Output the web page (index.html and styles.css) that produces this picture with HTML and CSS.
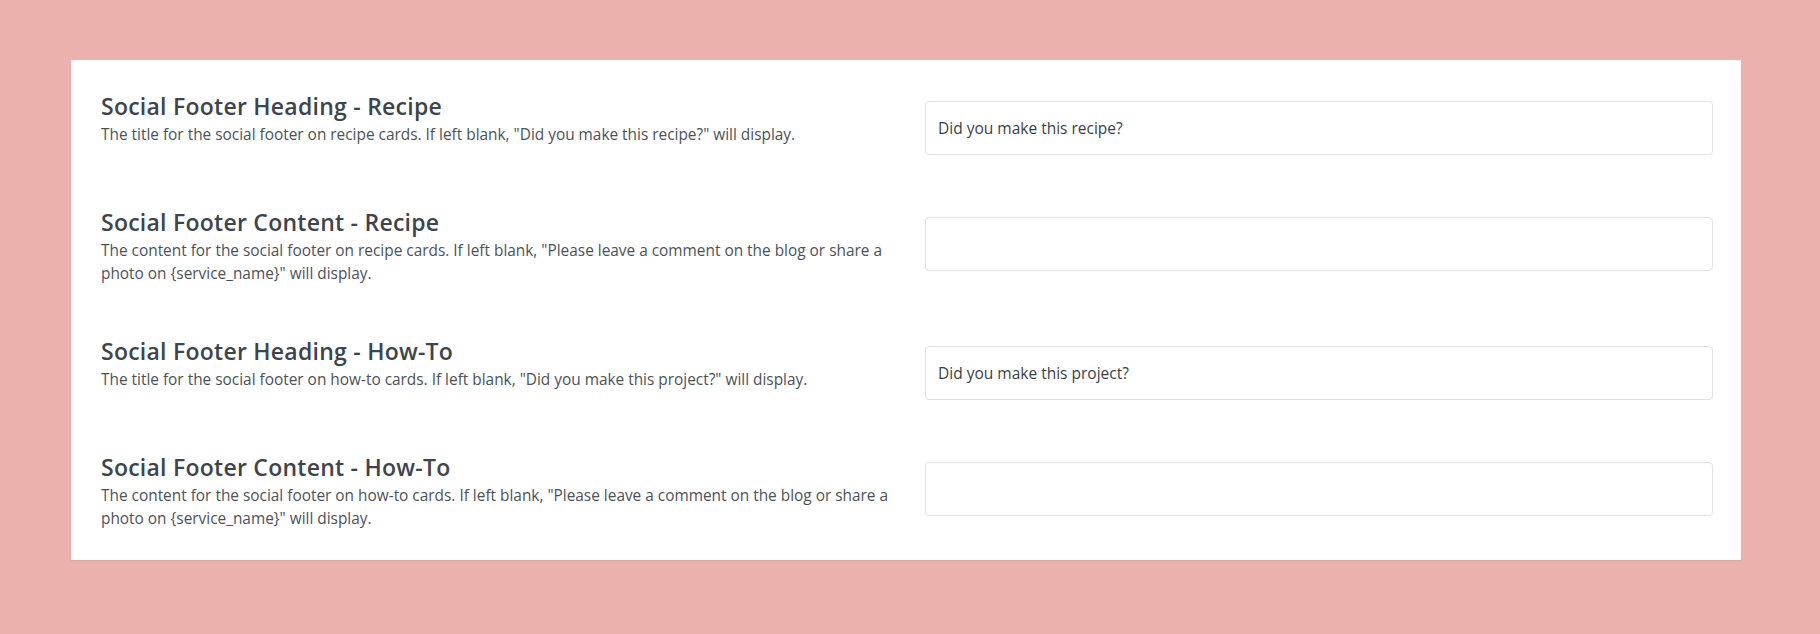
FILE: index.html
```html
<!DOCTYPE html>
<html lang="en">
<head>
<meta charset="utf-8">
<title>Social Footer Settings</title>
<link rel="stylesheet" href="styles.css">
</head>
<body>
<div class="stage">
  <section class="panel">
    <div class="row">
      <div class="label">
        <h3 class="title">Social Footer Heading - Recipe</h3>
        <p class="desc">The title for the social footer on recipe cards. If left blank, "Did you make this recipe?" will display.</p>
      </div>
      <div class="field"><input class="input" type="text" value="Did you make this recipe?"></div>
    </div>
    <div class="row">
      <div class="label">
        <h3 class="title">Social Footer Content - Recipe</h3>
        <p class="desc">The content for the social footer on recipe cards. If left blank, "Please leave a comment on the blog or share a photo on {service_name}" will display.</p>
      </div>
      <div class="field"><input class="input" type="text" value=""></div>
    </div>
    <div class="row">
      <div class="label">
        <h3 class="title">Social Footer Heading - How-To</h3>
        <p class="desc">The title for the social footer on how-to cards. If left blank, "Did you make this project?" will display.</p>
      </div>
      <div class="field"><input class="input" type="text" value="Did you make this project?"></div>
    </div>
    <div class="row">
      <div class="label">
        <h3 class="title">Social Footer Content - How-To</h3>
        <p class="desc">The content for the social footer on how-to cards. If left blank, "Please leave a comment on the blog or share a photo on {service_name}" will display.</p>
      </div>
      <div class="field"><input class="input" type="text" value=""></div>
    </div>
  </section>
</div>
</body>
</html>
```
FILE: styles.css
```css
html, body {
  margin: 0;
  padding: 0;
}
body {
  background: #ebb2ad;
  font-family: "Open Sans", "Liberation Sans", sans-serif;
  width: 1820px;
  height: 634px;
  overflow: hidden;
}
.stage {
  padding: 60px 79px 0 71px;
}
.panel {
  background: #ffffff;
  box-shadow: 0 1px 1px rgba(0, 0, 0, 0.05);
  padding: 30px 28px 29.5px 30px;
  display: flex;
  flex-direction: column;
  gap: 50px;
}
.row {
  display: grid;
  grid-template-columns: 1fr 788px;
  column-gap: 25px;
  align-items: start;
}
.title {
  margin: 2px 0 2px;
  font-size: 23px;
  line-height: 29px;
  letter-spacing: 0.25px;
  font-weight: 600;
  color: #3d454c;
}
.desc {
  margin: 0;
  font-size: 15.4px;
  line-height: 23px;
  color: #4c5258;
}
.field {
  margin-top: 11px;
  height: 55px;
}
.input {
  box-sizing: border-box;
  width: 100%;
  height: 54px;
  margin: 0;
  border: 1px solid #e1e1e1;
  border-radius: 4px;
  padding: 0 12px;
  font-family: "Open Sans", "Liberation Sans", sans-serif;
  font-size: 15.5px;
  color: #3a3f44;
  background: #ffffff;
  outline: none;
}
```
